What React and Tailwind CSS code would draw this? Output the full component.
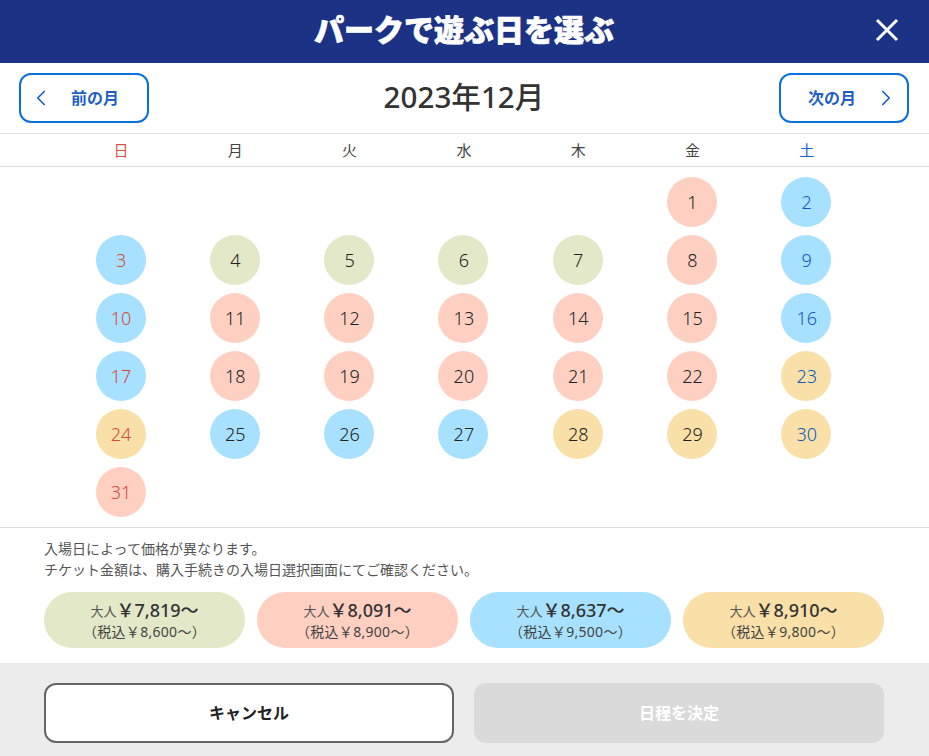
import React from 'react';
import { ChevronLeft, ChevronRight } from 'lucide-react';

const G = 'bg-[#e3e8c8]';
const R = 'bg-[#ffd0c2]';
const B = 'bg-[#a8e1ff]';
const Y = 'bg-[#f9e0a8]';

const weekdays = ['日', '月', '火', '水', '木', '金', '土'];

const days = [
  [1, R], [2, B],
  [3, B], [4, G], [5, G], [6, G], [7, G], [8, R], [9, B],
  [10, B], [11, R], [12, R], [13, R], [14, R], [15, R], [16, B],
  [17, B], [18, R], [19, R], [20, R], [21, R], [22, R], [23, Y],
  [24, Y], [25, B], [26, B], [27, B], [28, Y], [29, Y], [30, Y],
  [31, R],
];

const prices = [
  { color: G, base: '7,819', tax: '8,600' },
  { color: R, base: '8,091', tax: '8,900' },
  { color: B, base: '8,637', tax: '9,500' },
  { color: Y, base: '8,910', tax: '9,800' },
];

const dayColor = (i) => {
  const col = (i + 5) % 7;
  if (col === 0) return 'text-[#d4483f]';
  if (col === 6) return 'text-[#0f5bbd]';
  return 'text-[#222222]';
};

export default function App() {
  return (
    <div className="w-[929px] h-[756px] overflow-hidden bg-white flex flex-col text-[#333333] font-['Noto_Sans','Noto_Sans_CJK_JP',sans-serif]">
      <header className="relative h-[63px] shrink-0 bg-[#1c3285] flex items-center justify-center pr-px">
        <h1 className="text-[30px] font-black leading-none text-white pb-1 [-webkit-text-stroke:0.7px_white]">パークで遊ぶ日を選ぶ</h1>
        <button className="absolute right-[30px] top-[18px] text-white">
          <svg className="block w-[24px] h-[24px]" viewBox="0 0 24 24" fill="none" stroke="currentColor" strokeWidth="3">
            <path d="M2 2 L22 22 M22 2 L2 22" />
          </svg>
        </button>
      </header>

      <div className="h-[70px] shrink-0 pl-[19px] pr-[20px] flex items-center justify-between">
        <button className="w-[130px] h-[50px] rounded-[12px] border-2 border-[#0b6fe0] bg-white flex items-center pl-[7px] text-[#1f5fc4] text-base font-bold">
          <ChevronLeft className="w-[26px] h-[26px]" strokeWidth={1.6} />
          <span className="ml-[17px]">前の月</span>
        </button>
        <div className="text-[29.6px] font-medium leading-none -translate-y-px">2023年12月</div>
        <button className="w-[130px] h-[50px] rounded-[12px] border-2 border-[#0b6fe0] bg-white flex items-center justify-end pr-[8px] text-[#1f5fc4] text-base font-bold">
          <span className="mr-[17px]">次の月</span>
          <ChevronRight className="w-[26px] h-[26px]" strokeWidth={1.6} />
        </button>
      </div>

      <div className="h-[34px] shrink-0 border-y border-[#dddddd] flex justify-center pr-[2.2px]">
        <div className="w-[800px] grid grid-cols-7 items-center text-center text-[15px] text-[#444444]">
          {weekdays.map((d, i) => (
            <div key={d} className={`pl-px ${i === 0 ? 'text-[#d9534a]' : i === 6 ? 'text-[#1565c8]' : ''}`}>{d}</div>
          ))}
        </div>
      </div>

      <div className="h-[361px] shrink-0 border-b border-[#dddddd] flex justify-center pt-[10px] pr-[2.2px]">
        <div className="w-[800px] grid grid-cols-7 auto-rows-[58px] justify-items-center content-start">
          <div className="col-span-5" />
          {days.map(([n, color], i) => (
            <div key={n} className={`w-[50px] h-[50px] pl-px rounded-full flex items-center justify-center text-lg font-light ${color} ${dayColor(i)}`}>
              {n}
            </div>
          ))}
        </div>
      </div>

      <div className="flex-1 pl-[44px] pr-[45px] pt-[10px]">
        <p className="text-[14px] leading-[21px] text-[#555555]">
          入場日によって価格が異なります。<br />
          チケット金額は、購入手続きの入場日選択画面にてご確認ください。
        </p>
        <div className="mt-[12px] grid grid-cols-4 gap-[12px]">
          {prices.map((p) => (
            <div key={p.base} className={`h-[56px] pb-[2px] rounded-full flex flex-col items-center justify-center ${p.color}`}>
              <div className="leading-[24px] text-[#333333] font-medium text-lg">
                <span className="inline-block -translate-y-px text-[13px] font-normal text-[#555555]">大人</span>￥{p.base}〜
              </div>
              <div className="-mt-px text-[14px] leading-[18px] tracking-[0.3px] text-[#444444]">（税込￥{p.tax}〜）</div>
            </div>
          ))}
        </div>
      </div>

      <footer className="h-[93px] shrink-0 bg-[#ececec] pl-[44px] pr-[45px] pt-[20px] grid grid-cols-2 gap-[20px]">
        <button className="h-[60px] rounded-[12px] border-2 border-[#666666] bg-white text-base font-bold text-[#222222]">キャンセル</button>
        <button disabled className="h-[60px] rounded-[12px] bg-[#dadada] text-base font-bold text-white">日程を決定</button>
      </footer>
    </div>
  );
}
